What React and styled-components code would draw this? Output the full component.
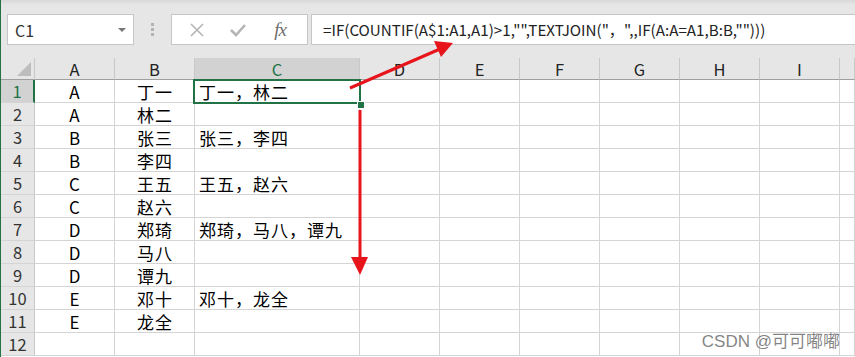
import styled, { createGlobalStyle } from "styled-components"

const GlobalStyle = createGlobalStyle`
  html, body {
    margin: 0;
    padding: 0;
    background: #fff;
    overflow: hidden;
  }
`

const CJK = `"Noto Sans CJK SC", "Noto Sans", sans-serif`

const Frame = styled.div`
  position: relative;
  width: 855px;
  height: 357px;
  box-sizing: border-box;
  border-left: 1px solid #217346;
  overflow: hidden;
  background: #fff;
  font-family: ${CJK};
`

const Toolbar = styled.div`
  height: 58px;
  box-sizing: border-box;
  display: flex;
  align-items: flex-start;
  padding: 14px 0 0 6px;
  background: linear-gradient(#d8d8d8 0, #e6e6e6 5px, #e6e6e6 100%);
`

const NameBox = styled.div`
  position: relative;
  width: 127px;
  height: 31px;
  box-sizing: border-box;
  border: 1px solid #c6c6c6;
  background: #fff;
  display: flex;
  align-items: center;
  padding-left: 7px;
  font-size: 16px;
  line-height: 1;
  color: #333;
`

const Caret = styled.span`
  margin-left: auto;
  margin-right: 7px;
  width: 0;
  height: 0;
  border-left: 4px solid transparent;
  border-right: 4px solid transparent;
  border-top: 4px solid #777;
`

const Grip = styled.div`
  width: 37px;
  height: 31px;
  display: flex;
  flex-direction: column;
  align-items: center;
  justify-content: center;
  gap: 2px;

  span {
    width: 3px;
    height: 3px;
    background: #b3b3b3;
  }
`

const FxButtons = styled.div`
  width: 137px;
  height: 31px;
  box-sizing: border-box;
  border: 1px solid #c6c6c6;
  background: #fff;
  display: flex;
  align-items: center;
  justify-content: space-around;
  padding: 0 6px 0 4px;
`

const FxButton = styled.span`
  width: 26px;
  display: flex;
  align-items: center;
  justify-content: center;
  color: #6e6e6e;
  font-family: "Liberation Serif", serif;
  font-style: italic;
  font-size: 19px;
  line-height: 1;
  letter-spacing: -1px;
`

const FormulaBar = styled.div`
  flex: 1;
  margin-left: 3px;
  height: 31px;
  box-sizing: border-box;
  border: 1px solid #c6c6c6;
  border-right: none;
  background: #fff;
  display: flex;
  align-items: center;
  padding-left: 11px;
  font-size: 15.2px;
  line-height: 1;
  color: #222;
  white-space: nowrap;
`

const Sheet = styled.div`
  display: grid;
  grid-template-columns: 34px 80px 80px 165px repeat(6, 80px) 1fr;
  grid-auto-rows: 23px;
  grid-template-rows: 22px;
  line-height: 1;
`

const CornerCell = styled.div`
  position: relative;
  box-sizing: border-box;
  background: #e6e6e6;
  border-right: 1px solid #c8c8c8;
  border-bottom: 1px solid #9f9f9f;

  &::after {
    content: "";
    position: absolute;
    right: 3px;
    bottom: 3px;
    border-left: 14px solid transparent;
    border-bottom: 14px solid #bdbdbd;
  }
`

const ColHeader = styled.div`
  box-sizing: border-box;
  display: flex;
  align-items: center;
  justify-content: center;
  background: ${(p) => (p.$active ? "#d2d2d2" : "#e6e6e6")};
  color: ${(p) => (p.$active ? "#217346" : "#222")};
  border-right: 1px solid #c8c8c8;
  border-bottom: 1px solid ${(p) => (p.$active ? "#217346" : "#9f9f9f")};
  font-size: 16.5px;
  padding-top: 1px;
`

const RowHeader = styled.div`
  box-sizing: border-box;
  display: flex;
  align-items: center;
  justify-content: center;
  background: ${(p) => (p.$active ? "#d2d2d2" : "#e6e6e6")};
  color: ${(p) => (p.$active ? "#217346" : "#333")};
  border-right: ${(p) => (p.$active ? "2px solid #217346" : "1px solid #c8c8c8")};
  border-bottom: 1px solid #d4d4d4;
  font-size: 16.5px;
`

const Cell = styled.div`
  box-sizing: border-box;
  display: flex;
  align-items: center;
  justify-content: ${(p) => (p.$align === "left" ? "flex-start" : "center")};
  padding-left: ${(p) => (p.$align === "left" ? "4px" : "1px")};
  border-right: 1px solid #d4d4d4;
  border-bottom: 1px solid #d4d4d4;
  font-size: 17px;
  letter-spacing: 1px;
  color: #000;
  white-space: nowrap;
  overflow: visible;
`

const Selection = styled.div`
  position: absolute;
  left: 192px;
  top: 79px;
  width: 168px;
  height: 25px;
  box-sizing: border-box;
  border: 2px solid #217346;
  pointer-events: none;
`

const FillHandle = styled.div`
  position: absolute;
  left: 356px;
  top: 101px;
  width: 6px;
  height: 6px;
  background: #217346;
  border: 1px solid #fff;
`

const Arrows = styled.svg`
  position: absolute;
  left: -1px;
  top: 0;
  pointer-events: none;
`

const Watermark = styled.div`
  position: absolute;
  right: 15px;
  bottom: 7px;
  font-size: 17px;
  line-height: 1;
  color: rgba(90, 90, 90, 0.75);
  font-family: "Liberation Sans", ${CJK};
`

const columns = ["A", "B", "C", "D", "E", "F", "G", "H", "I", ""]

const rows = [
  ["A", "丁一", "丁一，林二"],
  ["A", "林二", ""],
  ["B", "张三", "张三，李四"],
  ["B", "李四", ""],
  ["C", "王五", "王五，赵六"],
  ["C", "赵六", ""],
  ["D", "郑琦", "郑琦，马八，谭九"],
  ["D", "马八", ""],
  ["D", "谭九", ""],
  ["E", "邓十", "邓十，龙全"],
  ["E", "龙全", ""],
  ["", "", ""],
]

function Toolbox() {
  return (
    <Toolbar>
      <NameBox>
        C1
        <Caret />
      </NameBox>
      <Grip>
        <span />
        <span />
        <span />
      </Grip>
      <FxButtons>
        <FxButton>
          <svg width="14" height="14" viewBox="0 0 14 14">
            <path d="M1 1 L13 13 M13 1 L1 13" stroke="#b5b5b5" strokeWidth="1.6" fill="none" />
          </svg>
        </FxButton>
        <FxButton>
          <svg width="16" height="14" viewBox="0 0 16 14">
            <path d="M1 7 L6 12 L15 2" stroke="#b5b5b5" strokeWidth="2.6" fill="none" />
          </svg>
        </FxButton>
        <FxButton>fx</FxButton>
      </FxButtons>
      <FormulaBar>=IF(COUNTIF(A$1:A1,A1)&gt;1,"",TEXTJOIN("，",,IF(A:A=A1,B:B,"")))</FormulaBar>
    </Toolbar>
  )
}

export default function App() {
  return (
    <>
      <GlobalStyle />
      <Frame>
        <Toolbox />
        <Sheet>
          <CornerCell />
          {columns.map((c, i) => (
            <ColHeader key={i} $active={c === "C"}>
              {c}
            </ColHeader>
          ))}
          {rows.map((r, i) => (
            <RowCells key={i} index={i + 1} data={r} />
          ))}
        </Sheet>
        <Selection />
        <FillHandle />
        <Arrows width="855" height="357" viewBox="0 0 855 357">
          <line x1="350" y1="88" x2="440" y2="49" stroke="#e8141c" strokeWidth="3" />
          <polygon points="453,43 434,41 441,57" fill="#e8141c" />
          <line x1="360" y1="110" x2="360" y2="260" stroke="#e8141c" strokeWidth="3" />
          <polygon points="351,257 368,257 360,275" fill="#e8141c" />
        </Arrows>
        <Watermark>CSDN @可可嘟嘟</Watermark>
      </Frame>
    </>
  )
}

function RowCells({ index, data }) {
  return (
    <>
      <RowHeader $active={index === 1}>{index}</RowHeader>
      <Cell>{data[0]}</Cell>
      <Cell>{data[1]}</Cell>
      <Cell $align="left">{data[2]}</Cell>
      {columns.slice(3).map((_, i) => (
        <Cell key={i} />
      ))}
    </>
  )
}
